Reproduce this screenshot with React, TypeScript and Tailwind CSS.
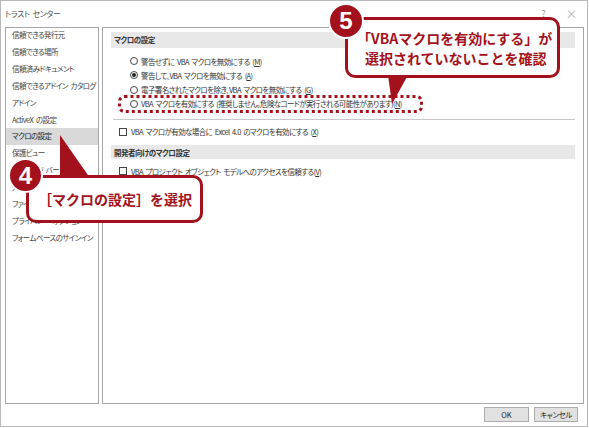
import React from 'react';

const menuItems = [
  '信頼できる発行元',
  '信頼できる場所',
  '信頼済みドキュメント',
  '信頼できるアドイン カタログ',
  'アドイン',
  'ActiveX の設定',
  'マクロの設定',
  '保護ビュー',
  'メッセージ バー',
  '外部コンテンツ',
  'ファイル制御の設定',
  'プライバシー オプション',
  'フォームベースのサインイン',
];

function Radio({ checked }: { checked?: boolean }) {
  return (
    <span className="w-[8px] h-[8px] rounded-full border border-[#444] bg-white flex items-center justify-center shrink-0">
      {checked && <span className="w-[4px] h-[4px] rounded-full bg-[#222]" />}
    </span>
  );
}

function Check() {
  return <span className="w-[8px] h-[8px] border border-[#444] bg-white shrink-0" />;
}

function Key({ k }: { k: string }) {
  return (
    <>
      (<span className="underline">{k}</span>)
    </>
  );
}

export default function App() {
  const radios = [
    { label: '警告せずに VBA マクロを無効にする ', k: 'M' },
    { label: '警告して、VBA マクロを無効にする ', k: 'A', checked: true },
    { label: '電子署名されたマクロを除き、VBA マクロを無効にする ', k: 'G' },
    { label: 'VBA マクロを有効にする (推奨しません。危険なコードが実行される可能性があります)', k: 'N' },
  ];

  return (
    <div className="relative w-[589px] h-[428px] bg-white overflow-hidden font-['Noto_Sans_CJK_JP','Noto_Sans',sans-serif] [font-feature-settings:'palt'] [word-spacing:1.5px] text-[#333]">
      {/* dialog */}
      <div className="w-[588px] h-[427px] border border-[#b9b9b9] flex flex-col">
        <div className="h-[26px] flex items-center justify-between pl-[4px] pr-[10px] text-[8px] tracking-[-0.4px] text-[#555]">
          <span>トラスト センター</span>
          <div className="flex items-center gap-[20px] text-[#999]">
            <span className="text-[9px]">?</span>
            <span className="text-[12px] font-light">×</span>
          </div>
        </div>

        <div className="flex gap-[3px] pl-[4px] h-[377px]">
          {/* left nav */}
          <div className="w-[94px] h-full border border-[#a8a8a8] bg-white">
            <div className="-mt-[2px]">
              {menuItems.map((item) => (
                <div
                  key={item}
                  className={`h-[16.95px] flex items-center pl-[6px] text-[7.5px] tracking-[-0.6px] whitespace-nowrap ${
                    item === 'マクロの設定' ? 'bg-[#d9d9d9] text-[#222]' : 'text-[#444]'
                  }`}
                >
                  {item}
                </div>
              ))}
            </div>
          </div>

          {/* right content */}
          <div className="w-[482px] h-full border border-[#a8a8a8] bg-white px-[8px] pt-[4px]">
            <div className="h-[16px] bg-[#e8e8e8] flex items-center pl-[3px] text-[7.5px] font-bold text-[#333] tracking-[-0.5px]">
              マクロの設定
            </div>
            <div className="pl-[19px] pt-[6px] flex flex-col">
              {radios.map((r) => (
                <div key={r.k} className="h-[14.3px] flex items-center gap-[3px] text-[7.5px] tracking-[-0.6px] whitespace-nowrap">
                  <Radio checked={r.checked} />
                  <span>
                    {r.label}
                    <Key k={r.k} />
                  </span>
                </div>
              ))}
            </div>
            <div className="h-px bg-[#c8c8c8] mt-[8px] ml-[2px]" />
            <div className="h-[23px] flex items-center gap-[4px] pl-[8px] text-[7.5px] tracking-[-0.6px] whitespace-nowrap">
              <Check />
              <span>
                VBA マクロが有効な場合に Excel 4.0 のマクロを有効にする <Key k="X" />
              </span>
            </div>
            <div className="h-[14px] bg-[#e8e8e8] flex items-center pl-[3px] text-[7.5px] font-bold text-[#333] tracking-[-0.5px] mt-[2px]">
              開発者向けのマクロ設定
            </div>
            <div className="h-[24px] flex items-center gap-[4px] pl-[8px] text-[7.5px] tracking-[-0.6px] whitespace-nowrap">
              <Check />
              <span>
                VBA プロジェクト オブジェクト モデルへのアクセスを信頼する<Key k="V" />
              </span>
            </div>
          </div>
        </div>

        <div className="flex-1 flex items-start justify-end gap-[5px] pt-[3px] pr-[9px]">
          <button className="w-[45px] h-[15px] bg-[#e1e1e1] border border-[#adadad] text-[7.5px] text-[#222] flex items-center justify-center">
            OK
          </button>
          <button className="w-[44px] h-[15px] bg-[#e1e1e1] border border-[#adadad] text-[7.5px] tracking-[-0.4px] text-[#222] flex items-center justify-center">
            キャンセル
          </button>
        </div>
      </div>

      {/* dotted highlight */}
      <svg className="absolute left-[118px] top-[95px]" width="305" height="18">
        <rect x="1.5" y="1.5" width="302" height="15" rx="5" fill="none" stroke="#a3121c" strokeWidth="3" strokeDasharray="3 3" />
      </svg>

      {/* callout 5 */}
      <div className="absolute left-[345px] top-[17px] w-[215px] h-[61px] border-[3px] border-[#a3121c] rounded-[10px] bg-white pl-[9px] pt-[8px] text-[14px] leading-[20px] font-bold text-[#a3121c] whitespace-nowrap [font-feature-settings:normal] [word-spacing:normal]">
        <div>「VBAマクロを有効にする」が</div>
        <div className="pl-[8px]">選択されていないことを確認</div>
      </div>
      <svg className="absolute left-0 top-0 pointer-events-none" width="589" height="428">
        <polygon points="388,75 408,75 392,104" fill="#a3121c" />
      </svg>
      <div className="absolute left-[328px] top-[3px] w-[36px] h-[36px] rounded-full bg-[#a3121c] border-2 border-white flex items-center justify-center text-white text-[24px] font-black font-['Liberation_Sans',sans-serif]">
        5
      </div>

      {/* callout 4 */}
      <div className="absolute left-[26px] top-[175px] w-[177px] h-[48px] border-[3px] border-[#a3121c] rounded-[10px] bg-white pl-[9px] flex items-center text-[14px] font-bold text-[#a3121c] whitespace-nowrap [font-feature-settings:normal] [word-spacing:normal]">
        ［マクロの設定］を選択
      </div>
      <svg className="absolute left-0 top-0 pointer-events-none" width="589" height="428">
        <polygon points="60,135 60,178 90,178" fill="#a3121c" />
      </svg>
      <div className="absolute left-[8px] top-[158px] w-[35px] h-[35px] rounded-full bg-[#a3121c] border-2 border-white flex items-center justify-center text-white text-[24px] font-black font-['Liberation_Sans',sans-serif]">
        4
      </div>
    </div>
  );
}
